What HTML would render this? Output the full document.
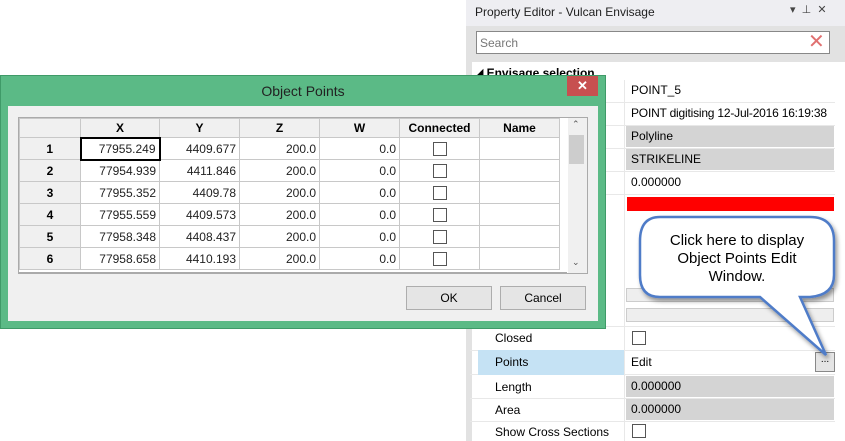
<!DOCTYPE html><html><head><style>
*{box-sizing:border-box;margin:0;padding:0}
body{width:845px;height:441px;overflow:hidden;background:#fff;font-family:"Liberation Sans",sans-serif;font-size:12px;color:#000;position:relative}
.a{position:absolute;white-space:nowrap}
.lbl{position:absolute;left:495px;font-size:12px}
.val{position:absolute;left:626px;width:208px;height:21px;padding-left:5px;line-height:21px;font-size:12px;white-space:nowrap;overflow:hidden}
.g{background:#d4d4d4}
.hl{position:absolute;left:470px;width:365px;height:1px;background:#e8e8e8}
.cb{position:absolute;width:14px;height:14px;border:1px solid #555;background:#fff}
table{border-collapse:collapse;position:absolute;left:19px;top:118px;table-layout:fixed}
td,th{border:1px solid #c8c8c8;height:22px;font-size:12px;padding:0 3px}
th{height:19px;background:#f0f0f0;font-weight:bold}
td.n{background:#f0f0f0;font-weight:bold;text-align:center}
td.r{text-align:right;color:#222}
.btn{position:absolute;height:24px;border:1px solid #adadad;background:#e5e5e5;text-align:center;line-height:22px;font-size:12px}
</style></head><body>
<div class="a" style="left:466px;top:0;width:379px;height:441px;background:#fff;border-left:1px solid #ccc"></div>
<div class="a" style="left:466px;top:0;width:379px;height:26px;background:#eeeef2"></div>
<div class="a" style="left:475px;top:5px;font-size:12px;color:#1e1e1e">Property Editor - Vulcan Envisage</div>
<div class="a" style="left:790px;top:3px;font-size:11px;color:#444">▾ &nbsp;⊥ &nbsp;✕</div>
<div class="a" style="left:466px;top:26px;width:379px;height:36px;background:#e2e2e2"></div>
<div class="a" style="left:476px;top:31px;width:354px;height:23px;border:1px solid #888;background:#fff"></div>
<div class="a" style="left:480px;top:36px;color:#777;font-size:12px">Search</div>
<div class="a" style="left:808px;top:29px;color:#e07070;font-size:20px">✕</div>
<div class="a" style="left:466px;top:62px;width:6px;height:379px;background:#e2e2e2"></div>
<div class="a" style="left:474px;top:66px;font-weight:bold;font-size:12px">◢ Envisage selection</div>
<div class="a" style="left:624px;top:80px;width:1px;height:361px;background:#e8e8e8"></div>
<div class="val" style="top:80px">POINT_5</div>
<div class="val" style="top:103px;letter-spacing:-0.2px">POINT digitising 12-Jul-2016 16:19:38</div>
<div class="val g" style="top:126px">Polyline</div>
<div class="val g" style="top:149px">STRIKELINE</div>
<div class="val" style="top:172px">0.000000</div>
<div class="a" style="left:627px;top:197px;width:207px;height:14px;background:#f00"></div>
<div class="a" style="left:626px;top:288px;width:208px;height:14px;background:#eee;border:1px solid #ccc"></div>
<div class="a" style="left:626px;top:308px;width:208px;height:14px;background:#eee;border:1px solid #ccc"></div>
<div class="hl" style="top:102px"></div><div class="hl" style="top:125px"></div><div class="hl" style="top:148px"></div><div class="hl" style="top:171px"></div><div class="hl" style="top:194px"></div><div class="hl" style="top:326px"></div><div class="hl" style="top:350px"></div><div class="hl" style="top:374px"></div><div class="hl" style="top:398px"></div><div class="hl" style="top:421px"></div>
<div class="lbl" style="top:331px">Closed</div><div class="cb" style="left:632px;top:331px"></div>
<div class="a" style="left:478px;top:350px;width:146px;height:25px;background:#c5e2f4"></div>
<div class="lbl" style="top:355px">Points</div><div class="a" style="left:631px;top:355px">Edit</div>
<div class="a" style="left:815px;top:352px;width:20px;height:20px;border:1px solid #888;background:#e5e5e5;text-align:center;font-size:10px;line-height:14px">...</div>
<div class="lbl" style="top:380px">Length</div><div class="val g" style="top:376px">0.000000</div>
<div class="lbl" style="top:403px">Area</div><div class="val g" style="top:399px">0.000000</div>
<div class="lbl" style="top:425px">Show Cross Sections</div><div class="cb" style="left:632px;top:424px"></div>
<svg class="a" style="left:630px;top:205px" width="215" height="160">
<defs><filter id="s"><feDropShadow dx="2" dy="3" stdDeviation="2" flood-opacity="0.4"/></filter></defs>
<path d="M30 12 H180 Q204 12 204 36 V70 Q204 90 180 92 H170 L196 150 L130 92 H30 Q10 92 10 70 V36 Q10 12 30 12 Z" fill="#fff" stroke="#4f7cc8" stroke-width="2.5" filter="url(#s)"/>
<text x="107" y="40" text-anchor="middle" font-size="15" font-family="Liberation Sans">Click here to display</text>
<text x="107" y="58" text-anchor="middle" font-size="15" font-family="Liberation Sans">Object Points Edit</text>
<text x="107" y="76" text-anchor="middle" font-size="15" font-family="Liberation Sans">Window.</text>
</svg>
<div class="a" style="left:0;top:75px;width:606px;height:254px;background:#5bba86;border:1px solid #3f9a68"></div>
<div class="a" style="left:0;top:83px;width:606px;text-align:center;font-size:14px;color:#222">Object Points</div>
<div class="a" style="left:567px;top:76px;width:31px;height:20px;background:#c75050;color:#fff;text-align:center;line-height:20px;font-size:13px;font-weight:bold">✕</div>
<div class="a" style="left:8px;top:106px;width:590px;height:215px;background:#f0f0f0"></div>
<div class="a" style="left:18px;top:117px;width:570px;height:157px;background:#fff;border:1px solid #aaa"></div>
<table>
<colgroup><col style="width:61px"><col style="width:79px"><col style="width:80px"><col style="width:80px"><col style="width:80px"><col style="width:80px"><col style="width:80px"></colgroup>
<tr><th></th><th>X</th><th>Y</th><th>Z</th><th>W</th><th>Connected</th><th>Name</th></tr>
<tr><td class="n">1</td><td class="r" style="border:2px solid #000">77955.249</td><td class="r">4409.677</td><td class="r">200.0</td><td class="r">0.0</td><td><div class="cb" style="position:relative;margin:auto"></div></td><td></td></tr>
<tr><td class="n">2</td><td class="r">77954.939</td><td class="r">4411.846</td><td class="r">200.0</td><td class="r">0.0</td><td><div class="cb" style="position:relative;margin:auto"></div></td><td></td></tr>
<tr><td class="n">3</td><td class="r">77955.352</td><td class="r">4409.78</td><td class="r">200.0</td><td class="r">0.0</td><td><div class="cb" style="position:relative;margin:auto"></div></td><td></td></tr>
<tr><td class="n">4</td><td class="r">77955.559</td><td class="r">4409.573</td><td class="r">200.0</td><td class="r">0.0</td><td><div class="cb" style="position:relative;margin:auto"></div></td><td></td></tr>
<tr><td class="n">5</td><td class="r">77958.348</td><td class="r">4408.437</td><td class="r">200.0</td><td class="r">0.0</td><td><div class="cb" style="position:relative;margin:auto"></div></td><td></td></tr>
<tr><td class="n">6</td><td class="r">77958.658</td><td class="r">4410.193</td><td class="r">200.0</td><td class="r">0.0</td><td><div class="cb" style="position:relative;margin:auto"></div></td><td></td></tr>
</table>
<div class="a" style="left:19px;top:272px;width:548px;height:1px;background:#aaa"></div>
<div class="a" style="left:568px;top:118px;width:19px;height:155px;background:#f0f0f0"></div>
<div class="a" style="left:569px;top:135px;width:15px;height:29px;background:#cdcdcd"></div>
<div class="a" style="left:572px;top:119px;font-size:9px;color:#555">⌃</div>
<div class="a" style="left:572px;top:257px;font-size:9px;color:#555">⌄</div>
<div class="btn" style="left:406px;top:286px;width:86px">OK</div>
<div class="btn" style="left:500px;top:286px;width:86px">Cancel</div>
</body></html>
